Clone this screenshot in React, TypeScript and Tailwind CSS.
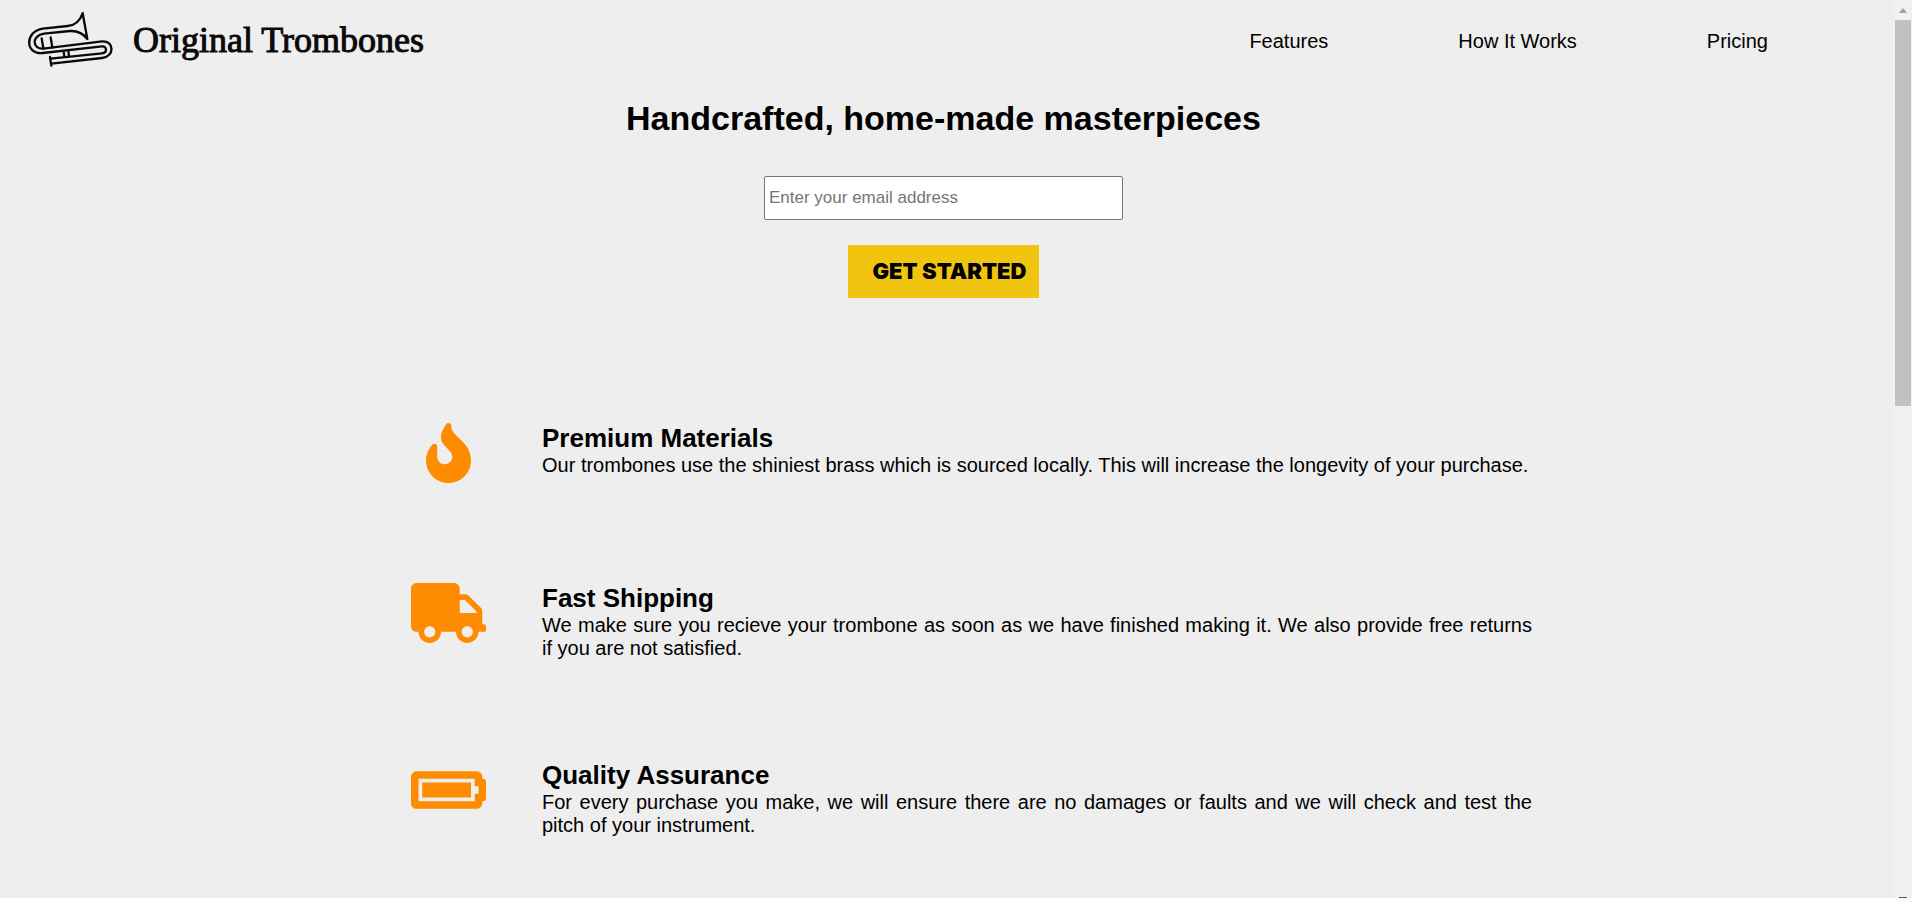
import React from "react";
import { FaBatteryFull, FaFire, FaTruck } from "react-icons/fa";

const links = [
  { label: "Features", href: "#features" },
  { label: "How It Works", href: "#how-it-works" },
  { label: "Pricing", href: "#pricing" },
];

const features = [
  {
    Icon: FaFire,
    title: "Premium Materials",
    text: "Our trombones use the shiniest brass which is sourced locally. This will increase the longevity of your purchase.",
  },
  {
    Icon: FaTruck,
    title: "Fast Shipping",
    text: "We make sure you recieve your trombone as soon as we have finished making it. We also provide free returns if you are not satisfied.",
  },
  {
    Icon: FaBatteryFull,
    title: "Quality Assurance",
    text: "For every purchase you make, we will ensure there are no damages or faults and we will check and test the pitch of your instrument.",
  },
];

function Trombone() {
  return (
    <svg
      viewBox="0 0 300 195"
      className="h-[65px] w-[100px] shrink-0"
      fill="none"
      stroke="#0a0a0a"
      strokeWidth="7"
      strokeLinecap="round"
      strokeLinejoin="round"
      aria-hidden="true"
    >
      <path d="M188 22 C180 44 168 58 143 60 L68 68 C14 76 14 146 68 141 L246 121 C262 120 262 141 246 142 L92 158" />
      <path d="M188 22 L202 99 C190 82 174 74 150 75 L72 83 C34 88 36 130 70 128 L246 106 C284 104 284 152 246 156 L94 173" />
      <path d="M90 153 L94 179" />
      <path d="M65 97 L70 127 M92 94 L97 124 M131 138 L133 152 M145 136 L147 150" />
    </svg>
  );
}

function ScrollTrack() {
  return (
    <div className="flex w-[19px] shrink-0 flex-col items-center bg-[#f1f1f1]" aria-hidden="true">
      <svg viewBox="0 0 16 20" className="h-5 w-4 shrink-0" fill="#a3a3a3">
        <path d="M4 13 L8 8 L12 13 Z" />
      </svg>
      <div className="h-[43%] w-4 bg-[#c1c1c1]" />
      <div className="mt-auto h-px w-2 bg-[#505050]" />
    </div>
  );
}

export default function App() {
  return (
    <div className="flex h-screen overflow-hidden bg-[#eeeeee] font-['Liberation_Sans',Arial,sans-serif] text-xl leading-[23px] text-black">
      <div className="min-w-0 flex-1 pr-1.5">
        <header className="flex h-[82px] items-center justify-between pl-5">
          <a href="#top" className="-mt-1.5 flex items-center gap-[13px]">
            <Trombone />
            <span className="pt-1 font-['Liberation_Serif',serif] text-4xl whitespace-nowrap text-[#0a0a0a] [-webkit-text-stroke:1px_#0a0a0a]">
              Original Trombones
            </span>
          </a>
          <nav className="mr-[119px]">
            <ul className="flex gap-[130px] whitespace-nowrap">
              {links.map((link) => (
                <li key={link.label}>
                  <a href={link.href}>{link.label}</a>
                </li>
              ))}
            </ul>
          </nav>
        </header>

        <main>
          <section className="flex flex-col items-center pt-4">
            <h1 className="text-[34px] leading-10 font-bold">Handcrafted, home-made masterpieces</h1>
            <form className="mt-[38px] flex flex-col items-center" onSubmit={(e) => e.preventDefault()}>
              <input
                type="email"
                aria-label="Email address"
                placeholder="Enter your email address"
                className="h-11 w-[359px] rounded-[2px] border border-[#767676] bg-white px-1 text-[17px] placeholder:text-[#757575]"
              />
              <button
                type="submit"
                className="mt-[25px] h-[53px] bg-[#f1c40f] pr-[13px] pl-[25px] font-['Inter','Liberation_Sans',sans-serif] text-[22px] font-black"
              >
                GET STARTED
              </button>
            </form>
          </section>

          <section id="features" className="mx-auto mt-[125px] flex w-[1177px] max-w-full flex-col gap-[100px]">
            {features.map(({ Icon, title, text }) => (
              <article key={title} className="flex items-start">
                <div className="flex w-[187px] shrink-0 justify-center">
                  <Icon className="h-[60px] w-[75px] text-[#ff8c00]" />
                </div>
                <div className="flex-1">
                  <h2 className="text-[26px] leading-[31px] font-bold">{title}</h2>
                  <p className="text-justify">{text}</p>
                </div>
              </article>
            ))}
          </section>
        </main>
      </div>
      <ScrollTrack />
    </div>
  );
}
